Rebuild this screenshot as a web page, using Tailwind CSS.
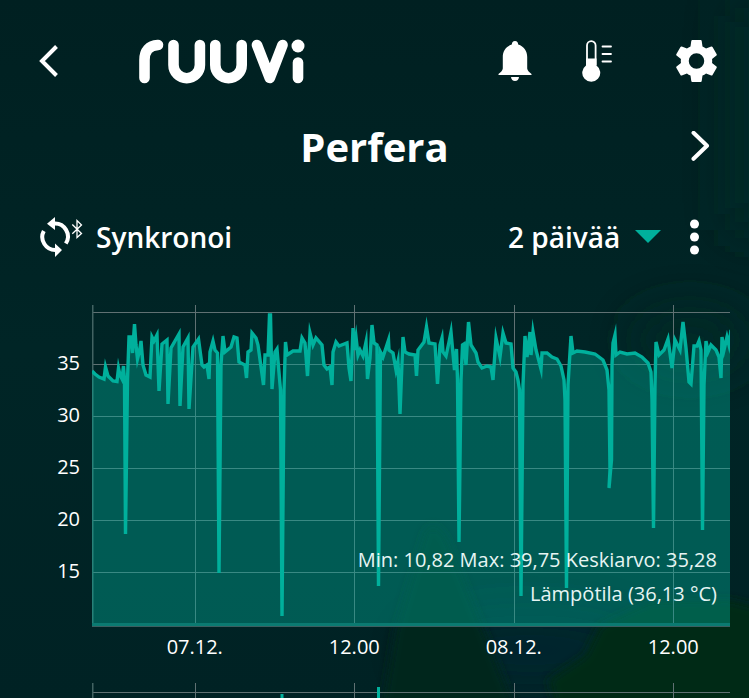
<!DOCTYPE html>
<html lang="fi">
<head>
  <meta charset="UTF-8" />
  <meta name="viewport" content="width=device-width, initial-scale=1.0"/>
  <title>Ruuvi - Perfera</title>
  <script src="https://cdn.jsdelivr.net/npm/@tailwindcss/browser@4"></script>
</head>
<body class="bg-[#002425] text-white font-['Open_Sans','Noto_Sans',sans-serif]">

  <div class="relative isolate min-h-screen overflow-hidden bg-linear-to-b from-[#002021] via-[#002526] to-[#002224]">

    <!-- Background scenery -->
    <svg class="absolute inset-0 -z-10 w-full h-full" viewBox="0 0 749 698" preserveAspectRatio="none" aria-hidden="true">
      <defs>
        <filter id="soft" x="-20%" y="-20%" width="140%" height="140%"><feGaussianBlur stdDeviation="5"/></filter>
        <filter id="haze" x="-200%" y="-200%" width="500%" height="500%"><feGaussianBlur stdDeviation="24"/></filter>
      </defs>
      <ellipse cx="690" cy="340" rx="60" ry="30" fill="#002b27" filter="url(#haze)"/>
      <rect x="730" y="0" width="60" height="230" fill="#002b25" filter="url(#haze)"/>
      <ellipse cx="530" cy="650" rx="120" ry="35" fill="#00262e" filter="url(#haze)"/>
      <path d="M380 720L395 630L425 530Q436 518 448 540L480 620L520 720Z" fill="#00271b" filter="url(#soft)"/>
      <path d="M560 720L548 680L585 655L600 625L650 602L730 600L770 610V720Z" fill="#002916" filter="url(#soft)"/>
    </svg>

    <!-- Top bar -->
    <header class="flex items-center h-[122px] pl-[38px] pr-8">
      <button aria-label="Takaisin">
        <svg class="w-5 h-8" viewBox="0 0 20 32" fill="none" stroke="currentColor" stroke-width="4"><path d="M18.500 1.500L4 16L18.500 30.500"/></svg>
      </button>
      <svg class="ml-20 w-[168px] h-[46px]" viewBox="138 38 168 46" fill="none" stroke="currentColor" stroke-width="10.600" stroke-linecap="round" stroke-linejoin="round" role="img" aria-label="ruuvi">
        <path d="M144.500 78V60Q144.500 46 158 45"/>
        <path d="M173.500 45V65a13.200 13.200 0 0 0 26.400 0V45"/>
        <path d="M215.300 45V65a13.200 13.200 0 0 0 26.400 0V45"/>
        <path d="M257 45L269.800 78L282.500 45"/>
        <path d="M298 62.500V78"/>
        <circle cx="298" cy="46" r="6.500" fill="currentColor" stroke="none"/>
      </svg>
      <div class="ml-auto flex items-center">
        <button aria-label="Hälytykset">
          <svg class="w-[34px] h-[42px]" viewBox="0 0 34 42" fill="currentColor">
            <path d="M17 1C14.800 1 14 2.300 13.800 4.500C8 6.500 4.800 11 4.800 17V28.500Q4.500 31 0.500 34V35H33.500V34Q29.500 31 29.200 28.500V17C29.200 11 26 6.500 20.200 4.500C20 2.300 19.200 1 17 1Z"/>
            <path d="M13 37H21Q20.500 41 17 41T13 37Z"/>
          </svg>
        </button>
        <button class="ml-[50px]" aria-label="Mittaukset">
          <svg class="w-[30px] h-[42px]" viewBox="0 0 30 42" fill="none" stroke="currentColor" stroke-width="1.800">
            <path d="M5 25V5.500a4.300 4.300 0 0 1 8.600 0V25"/>
            <path d="M4 18.500H14.500V25.500A9 9 0 1 1 4 25.500Z" fill="currentColor" stroke="none"/>
            <path d="M20.500 6.500H29M20.500 14H29M20.500 21.500H29" stroke-linecap="round"/>
          </svg>
        </button>
        <button class="ml-[64px]" aria-label="Asetukset">
          <svg class="w-[41px] h-[42px]" viewBox="2.200 2 19.600 20" fill="currentColor">
            <path d="M19.430 12.980c.04-.32.07-.64.07-.98s-.03-.66-.07-.98l2.110-1.650c.19-.15.24-.42.120-.64l-2-3.460c-.12-.22-.39-.3-.61-.22l-2.490 1c-.52-.4-1.080-.73-1.690-.98l-.38-2.650A.488.488 0 0 0 14 2h-4c-.25 0-.46.18-.49.42l-.38 2.650c-.61.25-1.170.59-1.690.98l-2.490-1c-.23-.09-.49 0-.61.22l-2 3.460c-.13.22-.07.49.12.64l2.110 1.650c-.04.32-.07.65-.07.98s.03.66.07.98l-2.110 1.650c-.19.15-.24.42-.12.64l2 3.460c.12.22.39.3.61.22l2.490-1c.52.4 1.080.73 1.690.98l.38 2.650c.03.24.24.42.49.42h4c.25 0 .46-.18.49-.42l.38-2.650c.61-.25 1.170-.59 1.690-.98l2.490 1c.23.09.49 0 .61-.22l2-3.460c.12-.22.07-.49-.12-.64l-2.110-1.650zM12 15.700a3.700 3.700 0 1 1 0-7.400a3.700 3.700 0 0 1 0 7.400z"/>
          </svg>
        </button>
      </div>
    </header>

    <!-- Sensor name -->
    <div class="grid grid-cols-[1fr_auto_1fr] items-center h-[50px] px-[39px]">
      <h1 class="col-start-2 text-[40px] leading-[50px] font-bold">Perfera</h1>
      <button class="justify-self-end" aria-label="Seuraava">
        <svg class="w-5 h-8" viewBox="0 0 20 32" fill="none" stroke="currentColor" stroke-width="4" stroke-linecap="round" stroke-linejoin="round"><path d="M3.500 1.800L17 14.800L3.500 27.800"/></svg>
      </button>
    </div>

    <!-- Sync and range -->
    <div class="mt-10 flex items-center justify-between h-[49px] pl-10 pr-[49px] text-[28px] leading-[44px] font-semibold">
      <button class="flex items-center gap-3">
        <svg class="w-11 h-[40px]" viewBox="40 217 44 40" fill="none" stroke="currentColor">
          <path d="M54 223.500A13 13 0 0 1 65.800 243.500" stroke-width="4"/>
          <path d="M56 250A13 13 0 0 1 43.800 231" stroke-width="4"/>
          <path d="M55 217V230L47 223.700ZM55 243.500V257L62 250Z" fill="currentColor" stroke="none"/>
          <path d="M72.300 224.500L81.500 233.500L77 237.500V220.500L81.500 225L72.300 233.800" stroke-width="1.300"/>
        </svg>
        <span>Synkronoi</span>
      </button>
      <div class="flex items-center">
        <select aria-label="Aikaväli" class="appearance-none bg-transparent h-[44px]">
          <option>2 päivää</option>
        </select>
        <svg class="ml-[14px] w-[26px] h-[13px] text-[#00b09c]" viewBox="0 0 26 13" fill="currentColor" aria-hidden="true"><path d="M0 0H26L13 13Z"/></svg>
        <button class="ml-[28px]" aria-label="Lisää">
          <svg class="w-[11px] h-[36px]" viewBox="0 0 11 36" fill="currentColor"><circle cx="5.500" cy="5" r="4.500"/><circle cx="5.500" cy="18" r="4.500"/><circle cx="5.500" cy="31" r="4.500"/></svg>
        </button>
      </div>
    </div>

    <!-- Temperature chart -->
    <section class="mt-11 pr-[19px] text-[20px]">
      <div class="flex">
        <div class="w-[92px] shrink-0 pt-8 pr-3 text-right leading-[52px]">
          <div>35</div>
          <div>30</div>
          <div>25</div>
          <div>20</div>
          <div>15</div>
        </div>
        <div class="relative flex-1">
          <svg class="w-full h-[322px]" viewBox="92 305 638 322" preserveAspectRatio="none" fill="none" role="img" aria-label="Lämpötila">
            <defs>
              <clipPath id="plot"><rect x="92" y="305" width="638" height="321"/></clipPath>
              <path id="temp" d="M92 371L95 374L99 377L104 379L105.500 367L108 376L113 381L117 381.500L118.500 368L120 375L122 379L123.500 366L124.500 380L125.500 534L127.500 380L129 337L131 337L132.500 353L134.500 324L136 345L137.500 359L139.500 351L141 341L143 365L146 375L150 377L152 337L154 341L157 335L159 391L162 344L167 340L168 404L171 348L179 334L180 406L183 347L188 338L189 409L193 347L198.500 339L202 365L204 367L207 365L209 379L210 352L213 341L215 350L217.500 353L219 573L221 365L223 336L225 352L231 347L234 337L237 338L239 362L245 365L246.500 378L248 352L251 350L252 333L256 338L258 345L263.500 385L265 355L268 355L269.500 315L270.500 315L272 389L275 352L277 349L280.500 390L282 616L284 390L285.500 342L287 355L293 351L300 351L302 338L305 343L307.500 376L310 333L313 345L316 338L322 345L324 365L327 369L330 367L332 385L333 352L336 342L339 346L347 343L349 368L351 381L353 328L354 350L356 337L358 355L360 350L363 356L366 342L367.500 379L370 358L372 325L374 343L377 345L378.500 586L380.500 352L383 357L388.500 340L389 350L393 353L396 370L398 361L400 414L403 337L405 352L409 354L415 355L416.500 376L418 350L424 342L426.500 327L429 343L435 344L437.500 384L440 345L442 338L443 352L446 356L449 342L451 332L454.500 370L456.500 349L457.500 380L459 542L461 380L462.500 345L464 344L466 365L468.500 322L471 345L476 353L478 362L482 368L487 366L491 367L493 380L496 338L500 357L503 333L506 343L511 344L513 368L516 372L518 380L519.500 390L521 596L523 385L525 336L527 357L530 332L531 355L533 332L536 350L541 369L542 353L547 353L552 357L557 359L561 366L564 380L565 400L566.500 588L568 385L571 336L573 353L577 351L585 352L595 354L603 360L607 370L609 390L610 470L609 488L611.500 460L612 365L613 343L615 335L616 355L620 352L627 354L635 353L642 357L648 363L651 372L652 400L653.500 528L655 385L656 342L659 355L664 350L668 339L672 368L675 340L680 350L683 322L686 348L689 382L691 384L694 346L697 346L699 341L701 350L702.500 530L704 385L706 341L708 352L711 345L716 350L719 357L721 378L722 337L724 350L727 337L729 345L731 330"/>
            </defs>
            <path d="M92 312.500H730M92 364.500H730M92 416.500H730M92 468.500H730M92 520.500H730M92 572.500H730M195.500 305V626M354.500 305V626M514.500 305V626M673.500 305V626" stroke="#607173"/>
            <path d="M92.500 305V626" stroke="#426362" stroke-width="2"/>
            <g clip-path="url(#plot)">
              <path fill="#00b09c" fill-opacity="0.400" d="M92 371L95 374L99 377L104 379L105.500 367L108 376L113 381L117 381.500L118.500 368L120 375L122 379L123.500 366L124.500 380L125.500 534L127.500 380L129 337L131 337L132.500 353L134.500 324L136 345L137.500 359L139.500 351L141 341L143 365L146 375L150 377L152 337L154 341L157 335L159 391L162 344L167 340L168 404L171 348L179 334L180 406L183 347L188 338L189 409L193 347L198.500 339L202 365L204 367L207 365L209 379L210 352L213 341L215 350L217.500 353L219 573L221 365L223 336L225 352L231 347L234 337L237 338L239 362L245 365L246.500 378L248 352L251 350L252 333L256 338L258 345L263.500 385L265 355L268 355L269.500 315L270.500 315L272 389L275 352L277 349L280.500 390L282 616L284 390L285.500 342L287 355L293 351L300 351L302 338L305 343L307.500 376L310 333L313 345L316 338L322 345L324 365L327 369L330 367L332 385L333 352L336 342L339 346L347 343L349 368L351 381L353 328L354 350L356 337L358 355L360 350L363 356L366 342L367.500 379L370 358L372 325L374 343L377 345L378.500 586L380.500 352L383 357L388.500 340L389 350L393 353L396 370L398 361L400 414L403 337L405 352L409 354L415 355L416.500 376L418 350L424 342L426.500 327L429 343L435 344L437.500 384L440 345L442 338L443 352L446 356L449 342L451 332L454.500 370L456.500 349L457.500 380L459 542L461 380L462.500 345L464 344L466 365L468.500 322L471 345L476 353L478 362L482 368L487 366L491 367L493 380L496 338L500 357L503 333L506 343L511 344L513 368L516 372L518 380L519.500 390L521 596L523 385L525 336L527 357L530 332L531 355L533 332L536 350L541 369L542 353L547 353L552 357L557 359L561 366L564 380L565 400L566.500 588L568 385L571 336L573 353L577 351L585 352L595 354L603 360L607 370L609 390L610 470L609 488L611.500 460L612 365L613 343L615 335L616 355L620 352L627 354L635 353L642 357L648 363L651 372L652 400L653.500 528L655 385L656 342L659 355L664 350L668 339L672 368L675 340L680 350L683 322L686 348L689 382L691 384L694 346L697 346L699 341L701 350L702.500 530L704 385L706 341L708 352L711 345L716 350L719 357L721 378L722 337L724 350L727 337L729 345L731 330V626H92Z"/>
              <use href="#temp" stroke="#00b09c" stroke-width="3.400" stroke-miterlimit="8"/>
            </g>
            <path d="M92 624.500H730" stroke="#0b7a71" stroke-width="3"/>
            <path d="M92 626.500H730" stroke="#3b5f60"/>
          </svg>
          <div class="absolute right-[13px] bottom-4 text-right leading-[34px] text-[#e6f5f3]">
            <p>Min: 10,82 Max: 39,75 Keskiarvo: 35,28</p>
            <p>Lämpötila (36,13 °C)</p>
          </div>
        </div>
      </div>
      <div class="ml-[115px] -mr-[23px] grid grid-cols-4 mb-4 text-center leading-10">
        <span>07.12.</span>
        <span>12.00</span>
        <span>08.12.</span>
        <span>12.00</span>
      </div>
    </section>

    <!-- Next chart -->
    <section class="pl-[92px] pr-[19px]">
      <svg class="block w-full h-[15px]" viewBox="92 683 638 15" preserveAspectRatio="none" fill="none" aria-hidden="true">
        <path d="M92 692.500H730M195.500 683V698M354.500 683V698M514.500 683V698M673.500 683V698" stroke="#607173"/>
        <path d="M92.500 683V698" stroke="#426362" stroke-width="2"/>
        <path d="M282 694V698M378.500 687V698" stroke="#00b09c" stroke-width="3"/>
      </svg>
    </section>
  </div>
</body>
</html>
